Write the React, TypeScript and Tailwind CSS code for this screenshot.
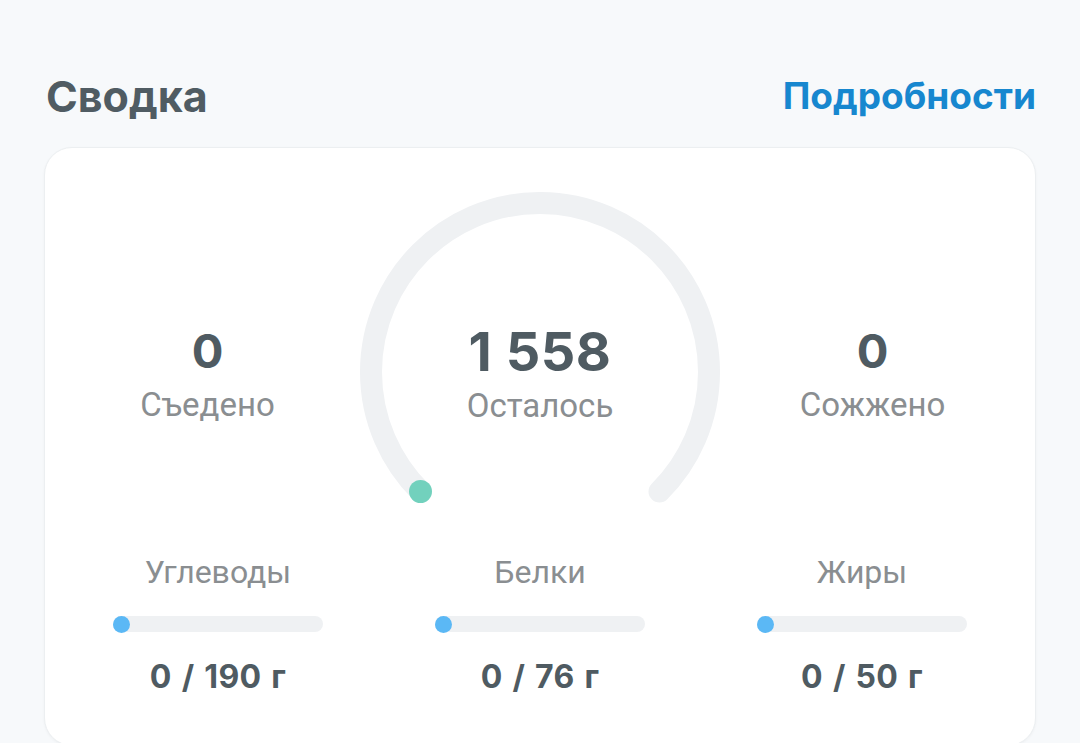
import { FC } from "react";

const macros = [
  { name: "Углеводы", eaten: 0, goal: 190 },
  { name: "Белки", eaten: 0, goal: 76 },
  { name: "Жиры", eaten: 0, goal: 50 },
];

const Gauge: FC = (): JSX.Element => {
  // arc of 270deg, gap at the bottom
  return (
    <div className="relative w-[360px] h-[320px]">
      <svg width="360" height="320" viewBox="0 0 360 320" className="absolute inset-0">
        <path
          d="M 60.5 299.5 A 169 169 0 1 1 299.5 299.5"
          fill="none"
          stroke="#eff1f3"
          strokeWidth="22"
          strokeLinecap="round"
        />
        <circle cx="60.5" cy="299.5" r="11.5" fill="#72d1bd" />
      </svg>
      <div className="absolute left-0 right-0 top-[182px] -translate-y-1/2 flex flex-col items-center">
        <span className="font-['Inter'] font-bold text-[54px] leading-[60px] text-[#4f5b62] tracking-[0.01em]">1 558</span>
        <span className="mt-[4px] font-['Roboto'] text-[33px] leading-[40px] text-[#8a8e91]">Осталось</span>
      </div>
    </div>
  );
};

const Stat: FC<{ value: number; label: string }> = ({ value, label }): JSX.Element => (
  <div className="self-start flex flex-col items-center pt-[131px]">
    <span className="font-['Inter'] font-bold text-[47px] leading-[56px] text-[#4f5b62]">{value}</span>
    <span className="mt-[6px] font-['Roboto'] text-[33px] leading-[40px] text-[#8a8e91]">{label}</span>
  </div>
);

const App: FC = (): JSX.Element => {
  return (
    <div className="min-h-[743px] bg-[#f7f9fb] px-[44px] pt-[68px]">
      <div className="flex items-center justify-between pl-[2px] h-[56px]">
        <h1 className="font-['Inter'] font-bold text-[43px] text-[#505c63]">Сводка</h1>
        <a className="font-['Inter'] font-bold text-[37px] text-[#1787cf]">Подробности</a>
      </div>
      <div className="mt-[23px] bg-white rounded-[28px] border border-[#eceff1] shadow-[0_1px_3px_rgba(0,0,0,0.04)] pt-[44px] pb-[50px]">
        <div className="grid grid-cols-[1fr_360px_1fr] px-[10px]">
          <Stat value={0} label="Съедено" />
          <Gauge />
          <Stat value={0} label="Сожжено" />
        </div>
        <div className="grid grid-cols-3 px-[12px] mt-[40px]">
          {macros.map((m) => (
            <div key={m.name} className="flex flex-col items-center">
              <span className="font-['Roboto'] text-[32px] leading-[40px] text-[#8a8e91]">{m.name}</span>
              <div className="relative mt-[24px] w-[210px] h-[16px] rounded-full bg-[#eff1f3]">
                <div
                  className="absolute top-[-0.5px] left-0 w-[17px] h-[17px] rounded-full bg-[#5bb8f5]"
                  style={{ marginLeft: `${(m.eaten / m.goal) * 193}px` }}
                />
              </div>
              <span className="mt-[27px] font-['Inter'] font-bold text-[32px] leading-[36px] text-[#4f5b62] tracking-[0.01em] [word-spacing:2px]">
                {m.eaten} / {m.goal} г
              </span>
            </div>
          ))}
        </div>
      </div>
    </div>
  );
};

export default App;
